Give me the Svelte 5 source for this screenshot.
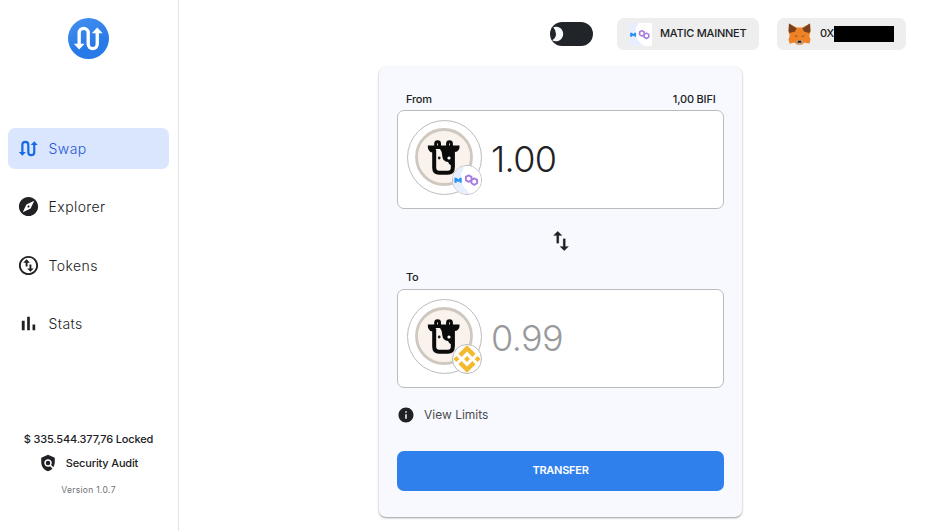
<script>
  const nav = [
    { label: 'Swap', icon: 'swap', active: true },
    { label: 'Explorer', icon: 'explorer' },
    { label: 'Tokens', icon: 'tokens' },
    { label: 'Stats', icon: 'stats' }
  ];
  const paths = {
    explorer: 'M12 10.9c-.61 0-1.1.49-1.1 1.1s.49 1.1 1.1 1.1 1.1-.49 1.1-1.1-.49-1.1-1.1-1.1zM12 2C6.48 2 2 6.48 2 12s4.48 10 10 10 10-4.48 10-10S17.52 2 12 2zm2.19 12.19L6 18l3.81-8.19L18 6l-3.81 8.19z',
    tokens: 'M12 2C6.48 2 2 6.48 2 12s4.48 10 10 10 10-4.48 10-10S17.52 2 12 2zm0 18c-4.41 0-8-3.59-8-8s3.59-8 8-8 8 3.59 8 8-3.59 8-8 8zM6.5 9L10 5.5 13.5 9H11v4H9V9H6.5zm11 6L14 18.5 10.5 15H13v-4h2v4h2.5z',
    stats: 'M5 9.2h3V19H5zM10.6 5h2.8v14h-2.8zm5.6 8H19v6h-2.8z'
  };
</script>

{#snippet swapMark(size)}
  <svg width={size} height={size} viewBox="0 0 24 24">
    <path d="M5.6 17V8.2a3.1 3.1 0 0 1 6.2 0v7.6a3.1 3.1 0 0 0 6.2 0V7" fill="none" stroke="currentColor" stroke-width="2.3" />
    <path d="M1.9 15.6h7.4l-3.7 4zM14.3 8.4h7.4L18 4.4z" fill="currentColor" />
  </svg>
{/snippet}

{#snippet polygon(size)}
  <svg width={size} height={size} viewBox="0 0 30 30">
    <rect width="30" height="30" fill="#fff" />
    <path d="M0 0h13Q7 7 9 16t11 14H0z" fill="#e8eefe" />
    <path d="M1.5 18v-5.3h2.2l1.9 1.7 1.9-1.7h1.8V18H7.2v-1.6l-1.6.8-1.7-.8V18z" fill="#2692ee" />
    <g fill="none" stroke="#a77bdf" stroke-width="2" stroke-linejoin="round">
      <path d="M16.8 10l3 1.7v3.5l-3 1.8-3-1.8v-3.5zM22.8 13.2l3 1.7v3.6l-3 1.7-3-1.7v-3.6z" />
    </g>
  </svg>
{/snippet}

{#snippet binance()}
  <svg width="28" height="28" viewBox="0 0 28 28" fill="#f3ba2f">
    <path d="M14 .3l8.6 8.5-3.2 3.2-5.4-5.4L8.6 12l-3.2-3.2zM3.4 11l3 3-3 3-3-3zM14 11l3 3-3 3-3-3zM24.6 11l3 3-3 3-3-3zM8.6 16l5.4 5.4 5.4-5.4 3.2 3.2-8.6 8.5-8.6-8.5z" />
  </svg>
{/snippet}

{#snippet token(chain)}
  <div class="token">
    <svg width="58" height="58" viewBox="0 0 58 58">
      <circle cx="29" cy="29" r="27.5" fill="#faf2ec" stroke="#cec8bf" stroke-width="2.8" />
      <g fill="none" stroke="#0b0b0b">
        <path d="M20.7 19v-3.4a1.9 1.9 0 0 1 3.8 0V19M32.6 19v-3.4a1.9 1.9 0 0 1 3.8 0V19" stroke-width="3" />
        <path d="M19.2 22v17.8q0 5 5 5h8.6q5 0 5-5V22" stroke-width="4" />
      </g>
      <path d="M12.8 17.4h31.8q.2 3.3-1.7 5.4-1.2 1.2-3.4 1.2v15h-2.6v-1.2q-3.3-1-3.8-3.8-5.3-.6-5.8-5.8.2-4.2-2.3-7.2h-4.2v3.6h-3.2q-5.2-.8-4.8-7.2z" fill="#0b0b0b" />
      <circle cx="24.2" cy="30" r="1.4" fill="#222" />
      <circle cx="34" cy="30" r="1.6" fill="#fff" />
    </svg>
    <span class="chain">
      {#if chain === 'bnb'}{@render binance()}{:else}{@render polygon(28)}{/if}
    </span>
  </div>
{/snippet}

<div class="app">
  <aside>
    <div class="logo">{@render swapMark(35)}</div>
    <nav>
      {#each nav as item}
        <div class="item" class:active={item.active}>
          {#if item.icon === 'swap'}
            {@render swapMark(23)}
          {:else}
            <svg width="23" height="23" viewBox="0 0 24 24"><path d={paths[item.icon]} fill="currentColor" /></svg>
          {/if}
          <span>{item.label}</span>
        </div>
      {/each}
    </nav>
    <footer>
      <div class="locked">$ 335.544.377,76 Locked</div>
      <div class="audit">
        <svg width="18" height="18" viewBox="0 0 24 24" fill="#202124"><path d="M21 5l-9-4-9 4v6c0 5.55 3.84 10.74 9 12 2.3-.56 4.33-1.9 5.88-3.71l-3.12-3.12c-1.94 1.29-4.58 1.07-6.29-.64-1.95-1.95-1.95-5.12 0-7.07s5.12-1.95 7.07 0c1.71 1.71 1.92 4.35.64 6.29l2.9 2.9C20.29 15.69 21 13.38 21 11z" /><circle cx="12" cy="12" r="3" /></svg>
        <span>Security Audit</span>
      </div>
      <div class="version">Version 1.0.7</div>
    </footer>
  </aside>

  <main>
    <header>
      <div class="toggle">
        <svg width="15" height="16" viewBox="0 0 15 16"><path d="M3.2 1.2A7.3 7.3 0 1 1 2.2 14.3Q6 12 6 8T3.2 1.2z" fill="#f8f9fa" /></svg>
      </div>
      <div class="pill network">{@render polygon(23)}<span>MATIC MAINNET</span></div>
      <div class="pill wallet">
        <svg width="23" height="22" viewBox="0 0 23 22">
          <path d="M1 .5l7.7 4h5.6l7.7-4 .5 8-1.2 4.4 1.2 3.6-1.2 4.2-4.8-1.2-2.6 2.2H9.1l-2.6-2.2-4.8 1.2L.5 16.5l1.2-3.6L.5 8.5z" fill="#ee8225" />
          <path d="M1 .5l7.7 5-2 3.3-5.2 1.2-.9-2zM22 .5l-7.7 5 2 3.3 5.2 1.2.9-2z" fill="#78401f" />
          <path d="M6.8 12.2l3 .8-.8.9-2.3-.5zM16.2 12.2l-3 .8.8.9 2.3-.5z" fill="#a25b25" />
          <path d="M8 17.5h7L13.7 21.5H9.3z" fill="#c4ad9d" />
          <path d="M9.9 17.8h3.2l.4 2h-4z" fill="#211914" />
        </svg>
        <span class="address">0X</span><i></i>
      </div>
    </header>

    <section class="card">
      <div class="labels"><span>From</span><span>1,00 BIFI</span></div>
      <div class="field">{@render token('polygon')}<span class="amount">1.00</span></div>
      <div class="switch">
        <svg width="26" height="26" viewBox="0 0 24 24"><path d="M9 3L5 6.99h3V14h2V6.99h3L9 3zm7 14.01V10h-2v7.01h-3L15 21l4-3.99h-3z" fill="#202124" stroke="#202124" stroke-width=".2" /></svg>
      </div>
      <div class="labels to"><span>To</span></div>
      <div class="field">{@render token('bnb')}<span class="amount muted">0.99</span></div>
      <div class="limits">
        <svg width="18" height="18" viewBox="0 0 24 24"><path d="M12 2C6.48 2 2 6.48 2 12s4.48 10 10 10 10-4.48 10-10S17.52 2 12 2zm1 15h-2v-6h2v6zm0-8h-2V7h2v2z" fill="#202124" /></svg>
        <span>View Limits</span>
      </div>
      <button>TRANSFER</button>
    </section>
  </main>
</div>

<style>
  .app {
    display: flex;
    width: 940px;
    height: 531px;
    overflow: hidden;
    background: #fff;
    color: #202124;
    font-family: Inter, "Liberation Sans", sans-serif;
  }
  .app * { box-sizing: border-box; }
  svg { display: block; flex: none; }
  aside {
    display: flex;
    flex-direction: column;
    width: 179px;
    padding: 18px 9px 0 8px;
    border-right: 1px solid #e3e4e6;
  }
  .logo {
    display: grid;
    place-items: center;
    width: 41px;
    height: 41px;
    margin-left: 60px;
    border-radius: 50%;
    background: linear-gradient(160deg, #4590f1, #287ae8 65%);
    color: #fff;
  }
  nav {
    display: flex;
    flex-direction: column;
    gap: 17.4px;
    margin-top: 69px;
  }
  .item {
    display: flex;
    align-items: center;
    gap: 8.6px;
    height: 41px;
    padding-left: 9px;
    border-radius: 7px;
    font-size: 14px;
    font-weight: 300;
    letter-spacing: .4px;
  }
  .item.active { background: #dae6fd; color: #1769e8; }
  .item.active span { color: #2856dc; }
  footer {
    display: flex;
    flex-direction: column;
    align-items: center;
    margin-top: 85px;
    font-size: 11px;
    font-weight: 500;
    letter-spacing: -.17px;
  }
  .locked { height: 20px; line-height: 20px; white-space: nowrap; }
  .audit {
    display: flex;
    align-items: center;
    gap: 9px;
    height: 28px;
  }
  .version {
    height: 25px;
    line-height: 26px;
    font-size: 8.5px;
    font-weight: 400;
    letter-spacing: .3px;
    color: #707175;
  }
  main { flex: 1; }
  header {
    display: flex;
    align-items: center;
    justify-content: flex-end;
    height: 32px;
    margin: 18px 34px 17px 0;
  }
  .toggle {
    display: flex;
    align-items: center;
    width: 43px;
    height: 24px;
    margin-right: 24px;
    border-radius: 12px;
    background: #212529;
  }
  .pill {
    display: flex;
    align-items: center;
    height: 32px;
    border-radius: 7px;
    background: #eee;
    font-size: 11px;
    font-weight: 500;
    letter-spacing: -.22px;
  }
  .pill span { margin-top: -2px; }
  .network { width: 142px; padding-left: 12px; gap: 8px; margin-right: 18px; white-space: nowrap; }
  .wallet { width: 129px; padding-left: 11px; }
  .pill .address { width: 14px; margin-left: 9px; }
  .wallet i { width: 60px; height: 16px; margin-top: -1px; background: #000; }
  .card {
    width: 363px;
    height: 450px;
    margin-left: 200px;
    padding: 23px 18px 0;
    border-radius: 7px;
    background: #f8f9fe;
    box-shadow: 0 1px 2px -1px rgba(0, 0, 0, .7), 0 1px 3px rgba(0, 0, 0, .2);
  }
  .labels {
    display: flex;
    justify-content: space-between;
    height: 20px;
    padding: 0 8.5px 0 9px;
    line-height: 19px;
    font-size: 11px;
    font-weight: 500;
    letter-spacing: -.2px;
  }
  .labels.to { line-height: 17px; }
  .field {
    display: flex;
    align-items: center;
    height: 99px;
    padding: 0 0 5px 9px;
    border: 1px solid #babbbd;
    border-radius: 7px;
    background: #fff;
  }
  .token {
    position: relative;
    display: grid;
    place-items: center;
    width: 75px;
    height: 75px;
    padding-right: 1px;
    border: 1px solid #bbb;
    border-radius: 50%;
  }
  .chain {
    position: absolute;
    right: -1px;
    bottom: -1px;
    width: 30px;
    height: 30px;
    overflow: hidden;
    border: 1px solid #bbb;
    border-radius: 50%;
    background: #fff;
  }
  .amount {
    margin: 3px 0 0 9px;
    font-size: 36px;
    font-weight: 300;
    letter-spacing: -.6px;
  }
  .muted { color: #999a9c; }
  .switch {
    display: grid;
    place-items: center;
    height: 60px;
    padding-top: 3px;
  }
  .limits {
    display: flex;
    align-items: center;
    gap: 9px;
    height: 53px;
    font-size: 12px;
    font-weight: 400;
    color: #4b4c50;
  }
  button {
    width: 327px;
    height: 40px;
    margin-top: 10px;
    padding-bottom: 3px;
    border: 0;
    border-radius: 7px;
    background: #2f80ed;
    color: #fff;
    font: 600 11px Inter, sans-serif;
    letter-spacing: -.25px;
  }
</style>
